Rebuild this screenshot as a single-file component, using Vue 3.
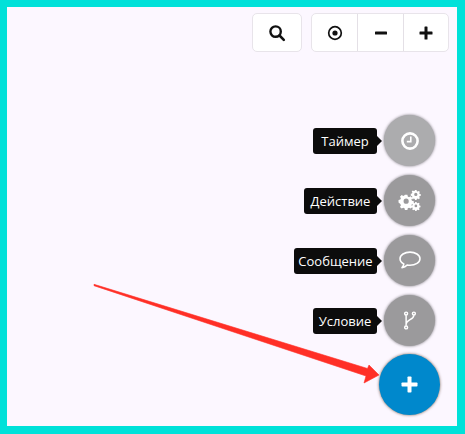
<template>
  <div class="screen">
    <div class="toolbar">
      <div class="btn-group">
        <button class="tool-btn search-btn" type="button">
          <svg width="18" height="18" viewBox="0 0 18 18" fill="none" stroke="#111" stroke-width="2.4">
            <circle cx="7.6" cy="7.6" r="5.2" />
            <path d="M11.5 11.5 15.8 15.8" stroke-linecap="round" stroke-width="2.6" />
          </svg>
        </button>
      </div>
      <div class="btn-group">
        <button class="tool-btn" type="button">
          <svg width="16" height="16" viewBox="0 0 16 16" fill="none" stroke="#111">
            <circle cx="8" cy="8" r="6.3" stroke-width="1.7" />
            <circle cx="8" cy="8" r="2.6" fill="#111" stroke="none" />
          </svg>
        </button>
        <button class="tool-btn wide" type="button">
          <svg width="14" height="14" viewBox="0 0 14 14"><rect x="1" y="5.5" width="12" height="3" rx="0.6" fill="#111" /></svg>
        </button>
        <button class="tool-btn" type="button">
          <svg width="14" height="14" viewBox="0 0 14 14" fill="#111">
            <rect x="0.5" y="5.5" width="13" height="3" rx="0.6" />
            <rect x="5.5" y="0.5" width="3" height="13" rx="0.6" />
          </svg>
        </button>
      </div>
    </div>

    <div class="fab-stack">
      <div v-for="item in items" :key="item.label" class="fab-row">
        <span class="fab-label" :style="{ width: item.width + 'px' }">{{ item.label }}</span>
        <button class="fab" :class="item.cls" type="button">
          <svg v-if="item.icon === 'clock'" width="20" height="20" viewBox="0 0 20 20" fill="none" stroke="#fff">
            <circle cx="10" cy="10" r="7.6" stroke-width="2.6" />
            <path d="M10.8 5.6V10.6H6.8" stroke-width="1.6" />
          </svg>
          <svg v-else-if="item.icon === 'gears'" width="23" height="21" viewBox="0 0 24 22" fill="#fff">
            <path fill-rule="evenodd" d="M7.2 5h2.6l.4 1.9 1.3.6 1.7-1 1.8 1.8-1 1.7.6 1.3 1.9.4v2.6l-1.9.4-.6 1.3 1 1.7-1.8 1.8-1.7-1-1.3.6-.4 1.9H7.2l-.4-1.9-1.3-.6-1.7 1-1.8-1.8 1-1.7-.6-1.3L.5 13v-2.6l1.9-.4.6-1.3-1-1.7L3.8 5.2l1.7 1 1.3-.6zM8.5 9a2.7 2.7 0 1 0 0 5.4 2.7 2.7 0 0 0 0-5.4z" />
            <path fill-rule="evenodd" d="M17.8 0h1.6l.3 1.3 1 .4 1.1-.7 1.1 1.1-.7 1.1.4 1 1.3.3v1.6l-1.3.3-.4 1 .7 1.1-1.1 1.1-1.1-.7-1 .4-.3 1.3h-1.6l-.3-1.3-1-.4-1.1.7-1.1-1.1.7-1.1-.4-1-1.3-.3V3.900l1.300-.3.4-1-.7-1.100 1.100-1.100 1.100.7 1-.4zM18.600 3a1.700 1.700 0 1 0 0 3.400 1.700 1.700 0 0 0 0-3.400z" />
            <path fill-rule="evenodd" d="M18 12.500h1.400l.3 1.100.9.4 1-.6 1 1-.6 1 .4.9 1.100.3V18l-1.100.3-.4.9.6 1-1 1-1-.6-.9.4-.3 1.100H18l-.3-1.100-.9-.4-1 .6-1-1 .6-1-.4-.9-1.100-.3v-1.400l1.100-.3.4-.9-.6-1 1-1 1 .6.900-.4zm.7 2.800a1.400 1.400 0 1 0 0 2.800 1.400 1.400 0 0 0 0-2.800z" />
          </svg>
          <svg v-else-if="item.icon === 'chat'" width="24" height="21" viewBox="0 0 22 20" fill="none" stroke="#fff" stroke-width="1.5">
            <path d="M11 2C5.900 2 1.500 4.700 1.500 8.300c0 2.100 1.500 3.800 3.600 4.900-.1 1.300-.7 2.600-1.700 3.600 2-.2 3.700-1.100 4.900-2.500.9.200 1.800.3 2.700.3 5.100 0 9.500-2.700 9.500-6.300S16.100 2 11 2z" stroke-linejoin="round" />
          </svg>
          <svg v-else-if="item.icon === 'branch'" width="16" height="19" viewBox="0 0 16 22" fill="none" stroke="#fff" stroke-width="1.7">
            <circle cx="3.500" cy="3" r="1.700" />
            <circle cx="12.500" cy="3" r="1.700" />
            <circle cx="3.500" cy="19" r="1.700" />
            <path d="M3.500 4.800V17.200M12.500 4.800C12.500 10 3.800 10 3.500 15" />
          </svg>
        </button>
      </div>
      <button class="fab fab-main" type="button">
        <svg width="17" height="17" viewBox="0 0 17 17" fill="#fff">
          <rect x="0.500" y="6.500" width="16" height="4" rx="0.800" />
          <rect x="6.500" y="0.500" width="4" height="16" rx="0.800" />
        </svg>
      </button>
    </div>

    <svg class="arrow" width="465" height="434" viewBox="0 0 465 434">
      <path d="M94 284.300 367.500 368.500 369 365 379 375 364 383 366 376 94 285.700z" fill="#ff2f26" stroke="#ff2f26" stroke-width="0.6" stroke-linejoin="round" />
    </svg>
  </div>
</template>

<script setup>
const items = [
  { label: 'Таймер', icon: 'clock', cls: 'fab-light', width: 64 },
  { label: 'Действие', icon: 'gears', cls: '', width: 73 },
  { label: 'Сообщение', icon: 'chat', cls: '', width: 83 },
  { label: 'Условие', icon: 'branch', cls: '', width: 64 }
]
</script>

<style>
html, body {
  margin: 0;
  padding: 0;
}
</style>

<style scoped>
.screen {
  position: relative;
  box-sizing: border-box;
  width: 465px;
  height: 434px;
  overflow: hidden;
  border-style: solid;
  border-color: #00e1d9;
  border-width: 7px 8px 8px 7px;
  background: #fcf7ff;
  padding: 6px 8px 0 0;
  font-family: "Open Sans", "Noto Sans", sans-serif;
}
.toolbar {
  display: flex;
  justify-content: flex-end;
  gap: 9px;
}
.btn-group {
  display: flex;
  background: #fff;
  border: 1px solid #e8e4ea;
  border-radius: 5px;
  height: 37px;
}
.tool-btn {
  width: 45px;
  padding: 0;
  border: 0;
  border-left: 1px solid #e4e0e6;
  background: none;
  display: flex;
  align-items: center;
  justify-content: center;
}
.tool-btn:first-child {
  border-left: 0;
}
.tool-btn.wide {
  width: 46px;
}
.search-btn {
  width: 48px;
}
.fab-stack {
  display: flex;
  flex-direction: column;
  align-items: flex-end;
  margin-top: 63px;
  padding-right: 9px;
}
.fab-row {
  display: flex;
  align-items: center;
  justify-content: flex-end;
  height: 51px;
  margin-bottom: 9px;
  padding-right: 5px;
}
.fab-label {
  position: relative;
  height: 26px;
  line-height: 26px;
  text-align: center;
  margin-right: 7px;
  background: #0c0c0c;
  color: #fff;
  font-size: 13px;
  font-weight: 500;
  border-radius: 3px;
  white-space: nowrap;
}
.fab-label::after {
  content: "";
  position: absolute;
  left: 100%;
  top: 8px;
  border-style: solid;
  border-width: 5px 0 5px 5px;
  border-color: transparent transparent transparent #0c0c0c;
}
.fab {
  width: 51px;
  height: 51px;
  padding: 0;
  border: 0;
  border-radius: 50%;
  background: #9b9a9c;
  box-shadow: 0 0 3px rgba(0, 0, 0, 0.55);
  display: flex;
  align-items: center;
  justify-content: center;
}
.fab-light {
  background: #acacae;
}
.fab-main {
  width: 61px;
  height: 61px;
  background: #0088cc;
  box-shadow: 0 0 3px rgba(60, 30, 0, 0.7);
  margin-top: -1px;
}
.arrow {
  position: absolute;
  left: -7px;
  top: -7px;
  pointer-events: none;
}
</style>
